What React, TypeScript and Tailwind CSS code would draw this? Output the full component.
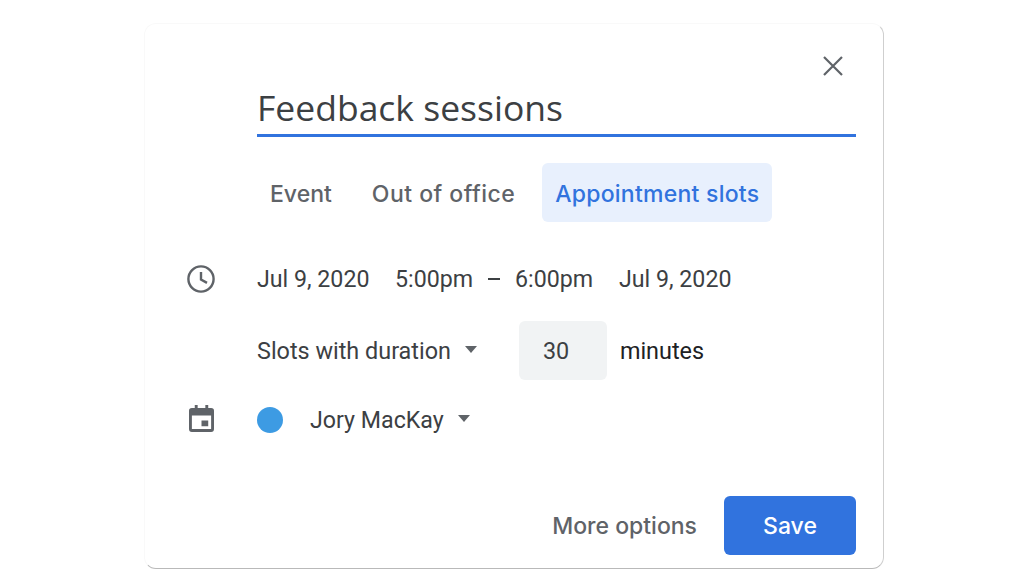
const GOOGLE = "font-['Inter','Open_Sans',sans-serif]";

function Caret({ className }: { className: string }) {
  return (
    <svg viewBox="0 0 12 7" className={className} fill="#5f6368">
      <path d="M0 0h12L6 7z" />
    </svg>
  );
}

export default function App() {
  return (
    <div className="min-h-[588px] bg-white pl-[144px] pt-[23px] font-['Roboto',sans-serif]">
      <div className="flex h-[546px] w-[740px] flex-col rounded-[12px] border border-[#f9f9f9] border-r-[#cfcfcf] border-b-[#b9b9b9] bg-white pb-[13px]">
        <div className="flex justify-end pr-[40px] pt-[32px]">
          <svg viewBox="0 0 20 20" className="h-5 w-5" fill="none" stroke="#5f6368" strokeWidth="2.2">
            <path d="M1 1l18 18M19 1L1 19" />
          </svg>
        </div>
        <div className="ml-[112px] mr-[27px] mt-[14px] h-[47px] border-b-[3px] border-[#3173de]">
          <div className="font-['Open_Sans',sans-serif] text-[35.5px] leading-[35px] text-[#3c4043]">Feedback sessions</div>
        </div>
        <div className={`ml-[112px] mt-[26px] flex gap-[14px] text-[23px] font-[450] ${GOOGLE}`}>
          <div className="flex h-[59px] items-center px-[13px] pt-[3px] text-[#5f6368]">Event</div>
          <div className="flex h-[59px] items-center px-[13px] pt-[3px] tracking-[0.47px] text-[#5f6368]">Out of office</div>
          <div className="flex h-[59px] items-center rounded-[6px] bg-[#e8f0fd] px-[13px] pt-[3px] tracking-[0.25px] text-[#3173de]">Appointment slots</div>
        </div>
        <div className="mt-[42px] flex h-[30px] items-center text-[23.2px] text-[#3c4043]">
          <div className="mb-[1px] flex w-[112px] justify-center">
            <svg viewBox="0 0 28 28" className="h-7 w-7" fill="none" stroke="#5f6368" strokeWidth="2.4">
              <circle cx="14" cy="14" r="12.6" />
              <path d="M14 7v7.5l6 3.4" />
            </svg>
          </div>
          <span className="w-[138px]">Jul 9, 2020</span>
          <span className="w-[93px]">5:00pm</span>
          <span className="h-[2px] w-[12px] bg-[#3c4043]" />
          <span className="ml-[15px] w-[104px]">6:00pm</span>
          <span>Jul 9, 2020</span>
        </div>
        <div className="mt-[27px] flex h-[59px] items-center text-[23.4px]">
          <span className="ml-[112px] pt-[2px] text-[#3c4043]">Slots with duration</span>
          <Caret className="mb-[3px] ml-[14px] h-[7px] w-[12px]" />
          <div className="ml-[42px] flex h-[59px] w-[88px] items-center rounded-[6px] bg-[#f1f3f4] pl-[24px] pt-[2px] text-[#3c4043]">30</div>
          <span className="ml-[13px] pt-[2px] text-[#202124]">minutes</span>
        </div>
        <div className="mt-[26px] flex h-[28px] items-center text-[23.2px] text-[#3c4043]">
          <div className="mb-[3px] flex w-[112px] justify-center">
            <svg viewBox="0 0 26 28" className="h-[27px] w-[25px]" fill="#5f6368">
              <path d="M6 0h3v3h8V0h3v3h3a3 3 0 0 1 3 3v19a3 3 0 0 1-3 3H3a3 3 0 0 1-3-3V6a3 3 0 0 1 3-3h3zM3 11v14h20V11zM13 16h7v6h-7z" fillRule="evenodd" />
            </svg>
          </div>
          <span className="h-[26px] w-[26px] rounded-full bg-[#3d9be3]" />
          <span className="ml-[27px]">Jory MacKay</span>
          <Caret className="mb-[3px] ml-[14px] h-[7px] w-[12px]" />
        </div>
        <div className="mt-auto flex items-center justify-end pr-[27px]">
          <span className={`mr-[27px] pt-[2px] text-[23px] font-[450] text-[#5f6368] ${GOOGLE}`}>More options</span>
          <div className={`flex h-[59px] w-[132px] items-center justify-center rounded-[6px] bg-[#3173de] pt-[2px] text-[23px] font-[450] text-white ${GOOGLE}`}>Save</div>
        </div>
      </div>
    </div>
  );
}
